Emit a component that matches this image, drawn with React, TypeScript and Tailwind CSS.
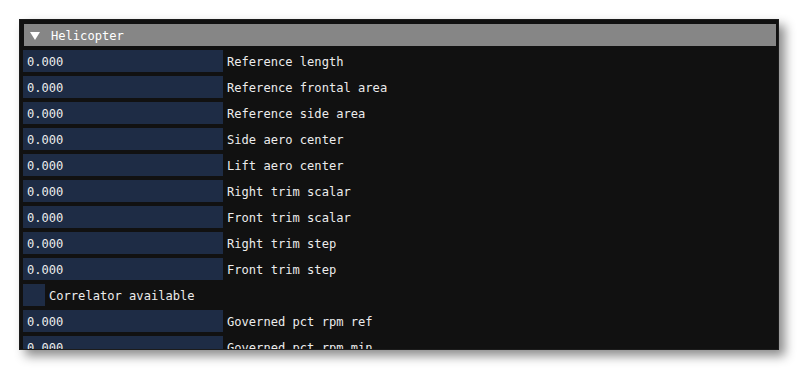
import React from "react";

type Row = { kind: "num"; label: string; value: string } | { kind: "check"; label: string };

const rows: Row[] = [
  { kind: "num", label: "Reference length", value: "0.000" },
  { kind: "num", label: "Reference frontal area", value: "0.000" },
  { kind: "num", label: "Reference side area", value: "0.000" },
  { kind: "num", label: "Side aero center", value: "0.000" },
  { kind: "num", label: "Lift aero center", value: "0.000" },
  { kind: "num", label: "Right trim scalar", value: "0.000" },
  { kind: "num", label: "Front trim scalar", value: "0.000" },
  { kind: "num", label: "Right trim step", value: "0.000" },
  { kind: "num", label: "Front trim step", value: "0.000" },
  { kind: "check", label: "Correlator available" },
  { kind: "num", label: "Governed pct rpm ref", value: "0.000" },
  { kind: "num", label: "Governed pct rpm min", value: "0.000" },
];

export default function App() {
  return (
    <div
      className="h-[370px] w-[799px] overflow-hidden bg-white pl-[19px] pt-[19px] text-[12.1px] text-[#ececec]"
      style={{ fontFamily: '"DejaVu Sans Mono", "Liberation Mono", monospace' }}
    >
      <div className="h-[331px] w-[760px] overflow-hidden border border-[#1c1c1c] bg-[#111111] pl-[3px] pt-[4px] shadow-[6px_6px_10px_rgba(0,0,0,0.45)]">
        <div className="ml-[1px] flex h-[22px] w-[752px] items-center bg-[#868686] pl-[6px] pt-[2px]">
          <svg width="10" height="8" viewBox="0 0 10 8" className="mb-[1px] mr-[11px]">
            <polygon points="0,0 10,0 5,8" fill="#ffffff" />
          </svg>
          <span className="text-white">Helicopter</span>
        </div>
        <div className="mt-[4px] flex flex-col gap-[4px]">
          {rows.map((r) =>
            r.kind === "num" ? (
              <div key={r.label} className="flex h-[22px] items-center">
                <div className="flex h-[22px] w-[200px] items-center bg-[#1e2c45] pl-[4px] pt-[2px]">
                  {r.value}
                </div>
                <span className="ml-[4px] pt-[2px]">{r.label}</span>
              </div>
            ) : (
              <div key={r.label} className="flex h-[22px] items-center">
                <div className="h-[22px] w-[22px] bg-[#1e2c45]" />
                <span className="ml-[4px] pt-[2px]">{r.label}</span>
              </div>
            )
          )}
        </div>
      </div>
    </div>
  );
}
